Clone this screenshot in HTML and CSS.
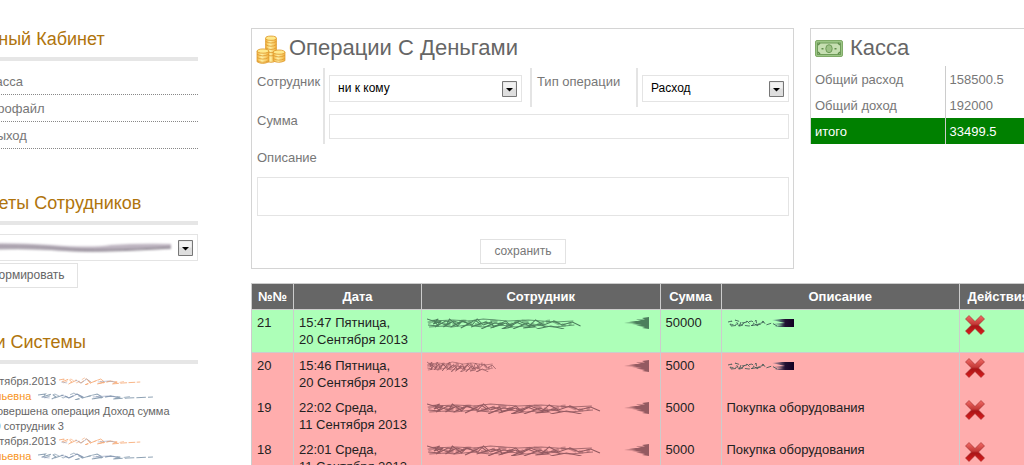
FILE: index.html
```html
<!DOCTYPE html>
<html lang="ru">
<head>
<meta charset="utf-8">
<title>Касса</title>
<link rel="stylesheet" href="styles.css">
</head>
<body>
<svg class="defs" aria-hidden="true">
  <defs>
    <linearGradient id="red" x1="0" y1="0" x2="0" y2="1"><stop offset="0" stop-color="#f26b66"/><stop offset=".45" stop-color="#c43a38"/><stop offset=".55" stop-color="#a81517"/><stop offset="1" stop-color="#dc1c1c"/></linearGradient>
    <linearGradient id="gold" x1="0" y1="0" x2="1" y2="0"><stop offset="0" stop-color="#f3b23a"/><stop offset=".4" stop-color="#fff2a8"/><stop offset="1" stop-color="#f3b03a"/></linearGradient>
    <linearGradient id="ink" x1="0" y1="0" x2="1" y2="0"><stop offset="0" stop-color="#246" stop-opacity=".2"/><stop offset=".6" stop-color="#213"/><stop offset="1" stop-color="#102"/></linearGradient>
    <symbol id="cross" viewBox="0 0 20 20"><path d="M4 .5 10 6.500l6-6L19.500 4 13.500 10l6 6-3.500 3.500-6-6-6 6L.5 16l6-6-6-6z" fill="url(#red)" stroke="#a02828" stroke-width=".6" stroke-linejoin="round"/></symbol>
    <symbol id="scrib" viewBox="0 0 170 12" preserveAspectRatio="none">
      <g fill="none" stroke="currentColor" stroke-width="1">
        <path d="M0 2l6 2 5-2-5 5 8-3-6 6 10-6 5 1-7 5 10-6 6 2-9 4 12-6 6 3-8 4 14-8 5 4-9 3 14-5 6 2-10 5 13-6 9 1-13 4 15-5 6 4-10 2 14-7 7 3-10 4 14-6 8 4-12 1 16-4 6 3-9 2 14-3 13 3"/>
        <path d="M1 8l10 1-4-5 12 4 3-6 8 7 4-5 10 4 5-6 6 6 8-3 2 5 12-6 5 5 8-5 10 5 6-6 8 5 10-4 8 4 10-3 8 4"/>
        <path d="M2 10l14-1 8 1 16-2 14 2 18-2 14 2 20-2 18 2 20-2M5 4l20-1 16 1 14-2 24 2 20-1 26 2 18-1" opacity=".8"/>
        <path d="M1 6q7-4 14 0t14 0 14 0 14 0 14 0 14 0 14 0 14 0 14 0 14 0" stroke-width="3" stroke-dasharray="7 2 4 3" opacity=".5"/>
      </g>
    </symbol>
    <symbol id="spike" viewBox="0 0 25 12"><path d="M0 6l12-1-7-1 12 0-5-1.500 9 0-3-1.500L25 0v12l-7-1 3-1-9-1.500 6-.5-10-1 5-.5z" fill="currentColor"/></symbol>
    <symbol id="note" viewBox="0 0 67 10">
      <path d="M1 4l4-1-2 4 8-1-3-4 6 2-2 5 8-6 5 5 4-6 1 6 6-5 3 4 6-2 5 3M15 5l10-2 4 4 8-3M4 8l10-1 8 1 12-2" fill="none" stroke="#35524f" stroke-width="1" stroke-dasharray="5 2" opacity=".8"/>
      <path d="M45 2l10-1h12v8H52l-5-1 9-1-11-1 13-1z" fill="url(#ink)"/>
    </symbol>
    <symbol id="smudge" viewBox="0 0 110 8" preserveAspectRatio="none">
      <g fill="none" stroke="currentColor" stroke-width="1">
        <path d="M0 3l7-1-3 3 9-3 4 3-4 2 11-4 5 3 8-4 5 3-7 3 14-4 7-2 5 3-10 2 18-3 9 1-7 2 14-1 24-1" stroke-dasharray="9 2"/>
        <path d="M6 6l10-4 8 4 10-5 8 5 10-3 8 3 10-2 8 2 12-2" stroke-dasharray="6 3" opacity=".7"/>
      </g>
      <path d="M3 5l8 1M22 3l8 3 7-4 6 3M52 5l14-1 9 1" fill="none" stroke="#7c8bb0" stroke-width="1" opacity=".5"/>
    </symbol>
    <symbol id="arrow" viewBox="0 0 15 16"><path d="M.5.5h14v15H.5z" fill="#dedede" stroke="#777"/><path d="M1.500 1.500h12v6h-12z" fill="#f2f2f2"/><path d="M4 7h7L7.500 10.500z" fill="#000"/></symbol>
  </defs>
</svg>

<div class="page">
  <aside class="sidebar">
    <section class="block">
      <h2>Личный Кабинет</h2>
      <ul class="nav">
        <li><a href="#">Касса</a></li>
        <li><a href="#">Профайл</a></li>
        <li><a href="#">Выход</a></li>
      </ul>
    </section>
    <section class="block">
      <h2>Отчеты Сотрудников</h2>
      <form class="report">
        <span class="select">
          <select aria-label="Сотрудник отчета"><option></option></select>
          <svg class="masked" viewBox="0 0 200 12" preserveAspectRatio="none" aria-hidden="true"><path d="M0 3q40-2 80 1t60 0q30-2 60-1v5q-30 0-60 2t-60-1q-40-2-80 0z" fill="#bdb4c0"/><path d="M0 6q50-3 90 1t110-1M0 9q50-3 90 0t110-2" fill="none" stroke="#8e8792"/></svg>
          <svg class="arrow" aria-hidden="true"><use href="#arrow"/></svg>
        </span>
        <button type="button">Сформировать</button>
      </form>
    </section>
    <section class="block">
      <h2>Логи Системы</h2>
      <div class="log">
        <p>9.Сентября.2013 <svg class="smudge orange" aria-hidden="true"><use href="#smudge"/></svg><br><a href="#">Васильевна</a> <svg class="smudge wide" aria-hidden="true"><use href="#smudge"/></svg><br><span class="event">Совершена операция Доход сумма</span><br>50000 сотрудник 3</p>
        <p>9.Сентября.2013 <svg class="smudge orange" aria-hidden="true"><use href="#smudge"/></svg><br><a href="#">Васильевна</a> <svg class="smudge wide" aria-hidden="true"><use href="#smudge"/></svg></p>
      </div>
    </section>
  </aside>

  <main class="main">
    <div class="top">
      <form class="panel operations">
        <h1><svg class="coins" viewBox="0 0 28 28" aria-hidden="true">
          <g fill="url(#gold)" stroke="#e09c30" stroke-width=".8">
            <path d="M9 3v21q5 3 10 0V3z"/><ellipse cx="14" cy="3" rx="5" ry="2" fill="#ffe98c"/>
            <path d="M9 6q5 3 10 0M9 9q5 3 10 0M9 12q5 3 10 0M9 15q5 3 10 0M9 18q5 3 10 0" fill="none"/>
            <path d="M1 15v10q5 3 11 0V15z"/><ellipse cx="6.500" cy="15" rx="5.500" ry="2" fill="#ffe98c"/>
            <path d="M1 18q5 3 11 0M1 21q5 3 11 0M1 24q5 3 11 0" fill="none"/>
            <path d="M16 16v8q5 3 11 0v-8z"/><ellipse cx="21.500" cy="16" rx="5.500" ry="2" fill="#ffe98c"/>
            <path d="M16 19q5 3 11 0M16 22q5 3 11 0" fill="none"/>
          </g></svg>Операции С Деньгами</h1>
        <div class="fields">
          <label class="cell line" for="who">Сотрудник</label>
          <div class="cell line control roomy"><span class="select"><select id="who"><option>ни к кому</option></select><svg class="arrow" aria-hidden="true"><use href="#arrow"/></svg></span></div>
          <label class="cell line" for="type">Тип операции</label>
          <div class="cell control"><span class="select"><select id="type"><option>Расход</option></select><svg class="arrow" aria-hidden="true"><use href="#arrow"/></svg></span></div>
          <label class="cell line" for="sum">Сумма</label>
          <div class="cell control rest"><input id="sum" type="text"></div>
        </div>
        <div class="about">
          <label for="about">Описание</label>
          <textarea id="about"></textarea>
          <button type="button">сохранить</button>
        </div>
      </form>

      <section class="panel cash">
        <h1><svg class="bill" viewBox="0 0 28 18" aria-hidden="true"><rect x=".5" y=".5" width="27" height="16" rx="1.500" fill="#9cc686" stroke="#80ab69"/><rect x="2.500" y="3" width="23" height="11.500" fill="#c6dfb2" stroke="#6f9c5a"/><ellipse cx="14" cy="8.700" rx="3.200" ry="4" fill="#9dc286" stroke="#6f9c5a"/><path d="M3 5l2-2M23 3l2 2M3 12l2 2M23 14l2-2M6.500 8.700h2M19.500 8.700h2" stroke="#5f8d4a" stroke-width="1.500"/></svg>Касса</h1>
        <table class="totals">
          <tr><th scope="row">Общий расход</th><td>158500.5</td></tr>
          <tr><th scope="row">Общий доход</th><td>192000</td></tr>
          <tr class="total"><th scope="row">итого</th><td>33499.5</td></tr>
        </table>
      </section>
    </div>

    <table class="entries">
      <colgroup><col class="c-num"><col class="c-date"><col><col class="c-sum"><col><col class="c-act"></colgroup>
      <thead><tr><th>№№</th><th>Дата</th><th>Сотрудник</th><th>Сумма</th><th>Описание</th><th>Действия</th></tr></thead>
      <tbody>
        <tr class="income"><td>21</td><td>15:47 Пятница,<br>20 Сентября 2013</td><td><span class="hidden-name"><svg class="name" aria-hidden="true"><use href="#scrib"/></svg><svg class="spike" aria-hidden="true"><use href="#spike"/></svg></span></td><td>50000</td><td><svg class="note" aria-hidden="true"><use href="#note"/></svg></td><td><button type="button" class="delete" aria-label="Удалить"><svg aria-hidden="true"><use href="#cross"/></svg></button></td></tr>
        <tr class="expense first"><td>20</td><td>15:46 Пятница,<br>20 Сентября 2013</td><td><span class="hidden-name"><svg class="name short" aria-hidden="true"><use href="#scrib"/></svg><svg class="spike" aria-hidden="true"><use href="#spike"/></svg></span></td><td>5000</td><td><svg class="note" aria-hidden="true"><use href="#note"/></svg></td><td><button type="button" class="delete" aria-label="Удалить"><svg aria-hidden="true"><use href="#cross"/></svg></button></td></tr>
        <tr class="expense"><td>19</td><td>22:02 Среда,<br>11 Сентября 2013</td><td><span class="hidden-name"><svg class="name long" aria-hidden="true"><use href="#scrib"/></svg><svg class="spike" aria-hidden="true"><use href="#spike"/></svg></span></td><td>5000</td><td>Покупка оборудования</td><td><button type="button" class="delete" aria-label="Удалить"><svg aria-hidden="true"><use href="#cross"/></svg></button></td></tr>
        <tr class="expense"><td>18</td><td>22:01 Среда,<br>11 Сентября 2013</td><td><span class="hidden-name"><svg class="name long" aria-hidden="true"><use href="#scrib"/></svg><svg class="spike" aria-hidden="true"><use href="#spike"/></svg></span></td><td>5000</td><td>Покупка оборудования</td><td><button type="button" class="delete" aria-label="Удалить"><svg aria-hidden="true"><use href="#cross"/></svg></button></td></tr>
      </tbody>
    </table>
  </main>
</div>
</body>
</html>
```
FILE: styles.css
```css
* { box-sizing: border-box; }
body {
  margin: 0;
  height: 100vh;
  overflow: hidden;
  background: #fff;
  color: #666;
  font: 13px/17px "Liberation Sans", Arial, sans-serif;
}
.defs { position: absolute; width: 0; height: 0; }
h1, h2, p, ul { margin: 0; padding: 0; font-weight: normal; }
svg { flex: none; }
button, input, select, textarea { font: inherit; color: inherit; border-radius: 0; outline-color: #b87810; }

.page {
  display: grid;
  grid-template-columns: 231px minmax(0, 1fr);
  column-gap: 53px;
  height: 100vh;
  overflow: hidden;
  margin: 0 -14px 0 -33px;
  padding-top: 28px;
}

.block { margin-bottom: 43px; }
.block h2 {
  border-bottom: 4px solid #e6e6e6;
  padding-bottom: 6px;
  color: #b0740c;
  font-size: 18px;
  line-height: 23px;
}
.nav { list-style: none; padding-top: 8px; }
.nav li { padding: 4px 21px; border-bottom: 1px dotted #888; }
.nav li + li { padding-top: 5px; }
.nav a { color: #777; text-decoration: none; }

.report { padding-top: 9px; }
.report button { margin-top: 2px; padding: 0 12px; }
button {
  height: 25px;
  padding: 0 13px;
  background: #fff;
  border: 1px solid #e2e2e2;
  font-size: 12px;
}
.select { position: relative; display: block; }
.select select {
  display: block;
  width: 100%;
  height: 27px;
  padding: 0 8px;
  border: 1px solid #e4e4e4;
  background: #fff;
  appearance: none;
  color: #000;
  font-size: 12px;
}
.arrow { position: absolute; top: 6px; right: 5px; width: 15px; height: 16px; pointer-events: none; }
.masked { position: absolute; top: 7px; left: 4px; width: 200px; height: 12px; pointer-events: none; filter: blur(1px); }

.log { padding: 10px 0 0 3px; font-size: 11px; line-height: 15px; color: #666; white-space: nowrap; }
.log a { color: #f7941d; text-decoration: none; }
.event { padding-left: 19px; }
.smudge { width: 82px; height: 8px; color: #8fa3b5; }
.smudge.wide { width: 116px; margin-left: 4px; }
.smudge.orange { color: #f7ab78; }

.top {
  display: grid;
  grid-template-columns: minmax(0, 543fr) minmax(0, 228fr);
  gap: 16px;
  align-items: start;
  margin-bottom: 14px;
}
.panel { border: 1px solid #d4d4d4; }
.panel h1 {
  display: flex;
  align-items: center;
  height: 37px;
  padding-left: 4px;
  font-size: 22px;
  line-height: 30px;
}
.coins { width: 30px; height: 30px; margin: 5px 3px 0 0; }
.bill { width: 28px; height: 18px; margin: 3px 7px 0 0; }

.fields {
  display: grid;
  grid-template-columns: 73px minmax(0, 207fr) 106px minmax(0, 155fr);
  padding-top: 2px;
}
.cell { padding: 5px 4px 5px 5px; color: #777; white-space: nowrap; }
.line { border-right: 2px solid #e4e4e4; }
.control { padding: 7px 4px 5px; }
.roomy { padding-right: 8px; }
.rest { grid-column: 2 / -1; }
.fields input { display: block; width: 100%; height: 25px; border: 1px solid #e4e4e4; }
.about { display: flex; flex-direction: column; padding: 5px 4px 4px 5px; color: #777; }
.about textarea { height: 39px; margin-top: 11px; border: 1px solid #e4e4e4; resize: none; }
.about button { align-self: center; margin-top: 23px; }

.cash { border-bottom: 0; border-right: 0; }
.totals { width: 100%; border-collapse: collapse; table-layout: fixed; }
.totals th, .totals td { padding: 5px 4px 4px; font-weight: normal; text-align: left; color: #777; }
.totals th { width: 134px; border-right: 1px solid #ccc; }
.totals .total { background: green; }
.totals .total th, .totals .total td { color: #fff; }

.entries { width: 100%; border-collapse: collapse; table-layout: fixed; color: #222; }
.c-num { width: 42px; }
.c-date { width: 128px; }
.c-sum { width: 61px; }
.c-act { width: 78px; }
.entries th { padding: 4px 0; border: 1px solid #ccc; background: #666; color: #fff; white-space: nowrap; }
.entries td { padding: 4px 4px 4px 5px; border-left: 1px solid #ccc; vertical-align: top; }
.income { background: #adffb8; }
.expense { background: #ffadad; }
.expense.first { border-top: 1px solid #ccc; }
.hidden-name { display: flex; justify-content: space-between; padding: 3px 7px 0 0; color: #4b7f5c; }
.expense .hidden-name { color: #945a61; }
.name { width: 174px; height: 12px; }
.name.short { width: 78px; }
.name.long { width: 196px; }
.spike { width: 25px; height: 12px; margin-left: -10px; }
.note { display: block; width: 67px; height: 10px; margin-top: 4px; }
.delete { display: block; height: 20px; margin-top: 1px; padding: 0; border: 0; background: none; cursor: pointer; }
.delete svg { display: block; width: 20px; height: 20px; }
```
